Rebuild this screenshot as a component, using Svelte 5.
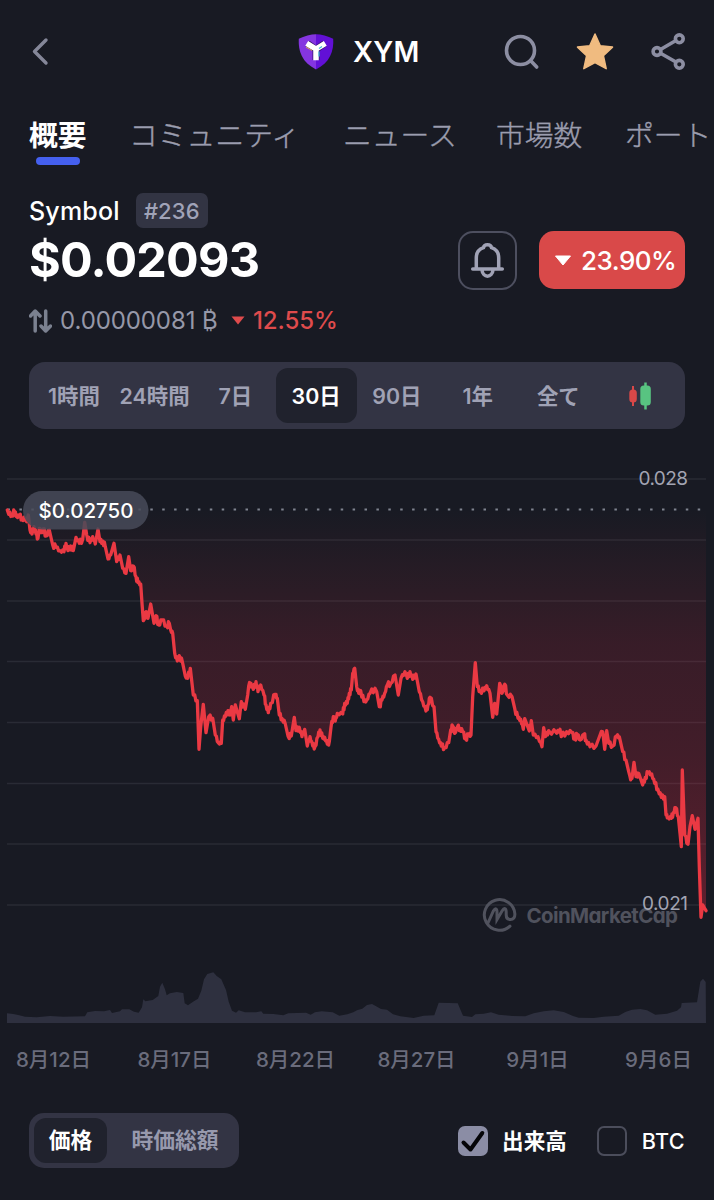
<script>
  const tabs = [
    { label: '概要', width: 100, active: true },
    { label: 'コミュニティ', width: 214 },
    { label: 'ニュース', width: 153 },
    { label: '市場数', width: 129 },
    { label: 'ポートフォリオ', width: 210 }
  ];
  const ranges = ['1時間', '24時間', '7日', '30日', '90日', '1年', '全て'];
  const dates = ['8月12日', '8月17日', '8月22日', '8月27日', '9月1日', '9月6日'];
  const gridLines = [479, 540, 601, 661.5, 722.5, 783.5, 844, 905];

  // Price samples, stored in thirds of a pixel and grouped by origin.
  const segments = [
    [0, 460, '22,150 26,163 36,163 44,155 50,170 58,168 66,175 75,178 80,185 85,165 90,210 96,222 102,200 108,222 114,235 118,205 124,218 130,207 138,228 148,210 158,255 168,262 180,272 192,275 198,250 204,272 212,258 220,272 228,232 238,250 248,238 254,187 260,225 270,248 278,230 286,252 294,207 300,245 308,243 316,260 324,297 332,285 342,250 350,305 360,285 368,325 378,340 386,290 392,332 400,318 408,350 414,368 422,372 426,430 430,482 438,455 444,475 452,432 462,490 468,467 476,495 486,480 500,498 508,490 512,510 518,520 524,580 532,603 538,587 548,610 556,648 563,655 571,625 580,705 592,722 597,868 602,800 610,733 618,818 626,770 638,775 646,825 655,848 664,850'],
    [180, 640, '128,240 136,230 144,212 150,225 155,200 160,240 166,195 178,236 184,185 196,208 203,165 206,138 213,130 220,148 228,125 234,155 242,135 252,165 258,195 265,218 272,190 286,163 292,175 298,225 306,235 316,252 324,288 334,288 343,232 348,272 358,262 366,290 374,268 382,318 390,290 398,318 405,320 414,290 420,270 428,295 434,292 442,312 448,305 453,262 460,230 466,243 472,220 488,222 494,190 502,190 508,160 514,150 518,100 524,85 530,140 536,160 542,152 552,185 560,180 570,160 585,145 590,155 598,200 606,180 614,160 622,135'],
    [390, 640, '2,130 15,105 25,165 33,115 45,95 52,115 60,95 68,118 78,102 88,155 98,185 108,213 114,195 120,172 132,200 138,275 146,298 154,318 164,323 176,308 182,270 188,258 194,280 202,262 210,265 218,275 227,297 235,285 243,285 248,170 256,68 262,140 270,152 282,152 290,137 300,160 308,232 314,190 320,222 329,130 336,160 344,133 352,165 366,170 374,205 384,235 392,238 400,268 404,236 418,273 424,242 430,285 444,290 456,320 461,263 466,290 476,272 500,280 510,268 514,290 530,275 546,278 554,297 562,283 570,300 582,283 588,300 600,320 618,318 632,280 638,275 644,328 650,272 656,310 668,318 680,288 688,290 698,335 708,360'],
    [560, 700, '206,215 210,230 216,235 222,187 228,230 236,220 248,255 256,232 264,218 275,222 284,250 294,268 304,292 314,290 318,345 324,352 334,355 340,338 347,323 355,350 360,400 364,440 367,210 370,290 374,405 384,433 390,380 397,347 405,388 414,355 418,500 423,652 428,615 438,632']
  ];
  const points = (list) =>
    list.flatMap(([ox, oy, s]) =>
      s.split(' ').map((p) => {
        const [x, y] = p.split(',').map(Number);
        return [ox + x / 3, oy + y / 3];
      })
    );
  const toPath = (pts) => 'M' + pts.map(([x, y]) => x.toFixed(1) + ' ' + y.toFixed(1)).join('L');

  const ticks = (pts) =>
    pts.flatMap(([x, y], i) => {
      const next = pts[i + 1];
      if (!next || next[0] > 690 || Math.abs(next[1] - y) > 11 || next[0] - x < 2) return [[x, y]];
      const d = [1.8, -2.2, 2.6, -1.4, 1.2, -2.6][i % 6];
      return [
        [x, y],
        [x + (next[0] - x) * 0.35, y + (next[1] - y) * 0.35 + d],
        [x + (next[0] - x) * 0.65, y + (next[1] - y) * 0.65 - d]
      ];
    });
  const price = toPath(ticks(points(segments)));
  const priceArea = price + 'L706 509L7 509Z';

  const volumeSegments = [
    [0, 950, '21,190 40,192 58,196 75,200 110,202 150,198 190,200 255,199 262,187 285,183 312,184 330,180 336,189 360,184 366,178 388,178 402,185 416,188 426,172 430,148 436,154 458,150 475,138 480,110 487,98 495,118 500,136 510,130 530,126 550,129 554,160 564,166 578,156 594,146 604,122 612,88 622,72 640,67 650,78 664,88 678,120 686,155 696,182 708,188 716,181 735,187 768,187 784,184 790,191 820,192 850,196 865,190 918,188 932,194 945,187 965,184 998,187 1018,197 1042,193 1060,187 1071,181'],
    [357, 880, '2,390 16,386 30,375 45,372 60,380 72,387 90,389 108,403 130,409 170,414 200,407 232,406 245,368 302,370 318,407 345,411 355,403 380,401 402,397 425,404 465,408 505,409 530,400 560,394 590,391 620,396 648,408 665,413 710,414 740,410 785,407 805,396 825,389 850,387 870,391 895,404 930,401 960,392 972,382 974,369 1020,367 1030,305 1038,296 1046,306']
  ];
  const volume = toPath(points(volumeSegments)) + 'L706 1023L7 1023Z';

  let showVolume = $state(true);
</script>

<main>
  <header>
    <svg class="back" width="20" height="30" viewBox="0 0 20 30"><path d="M16 4 4.500 15.500 16 27" /></svg>
    <div class="coin">
      <svg width="36" height="36" viewBox="0 0 36 36">
        <path d="M18 .2C13 .3 6 2 .8 4.800 0 17 4 28.500 18 35.500Z" fill="#8435e0" />
        <path d="M18 .2C23 .3 30 2 35.200 4.800 36 17 32 28.500 18 35.500Z" fill="#6210d6" />
        <path d="M9.500 9.500 18 15.500 26.500 9.500M18 15v11" fill="none" stroke="#38146d" stroke-width="7" />
        <path d="M8.700 9.300 18 15 27.300 9.300M18 14v12.200" fill="none" stroke="#fff" stroke-width="5.500" />
        <path d="m8 13 6 3.500" stroke="#d8a15e" stroke-width="1" />
        <path d="M21 17.500v5m0-8 3-2" stroke="#3bb8d7" stroke-width="1.200" fill="none" />
      </svg>
      <h1>XYM</h1>
    </div>
    <div class="tools">
      <svg width="36" height="38" viewBox="0 0 36 38"><circle cx="16.500" cy="17.500" r="14" /><path d="m26.500 27.500 6.200 6.500" /></svg>
      <svg width="40" height="40" viewBox="0 0 40 40"><path class="star" d="m20 2 5.300 11.800 12.200 1.300-9.100 8.600 2.800 13-11.200-6-11.200 6 2.800-13-9.100-8.600 12.200-1.300Z" /></svg>
      <svg width="36" height="40" viewBox="0 0 36 40"><path d="m9.500 17.500 15-8.800M9.500 21.300l15 8.500" /><circle cx="6" cy="19.500" r="3.900" /><circle cx="28.300" cy="6.800" r="3.900" /><circle cx="28.300" cy="32.300" r="3.900" /></svg>
    </div>
  </header>

  <nav>
    {#each tabs as tab}
      <span class="tab" class:active={tab.active} style="width: {tab.width}px"><b>{tab.label}</b></span>
    {/each}
  </nav>

  <section class="summary">
    <div class="figures">
      <div class="name"><span>Symbol</span><span class="rank">#236</span></div>
      <div class="price">$0.02093</div>
      <div class="btc">
        <svg width="23" height="24" viewBox="0 0 23 24"><path d="M6.200 22V3M1.500 7 6.200 2 11 7M16.700 2v19M12 17l4.700 5 4.800-5" /></svg>
        <span class="amount">0.00000081 <i>₿</i></span>
        <svg class="caret" width="14" height="9" viewBox="0 0 14 9"><path d="M.5.5h13L7 8.500Z" /></svg>
        <span class="loss">12.55%</span>
      </div>
    </div>
    <div class="actions">
      <div class="bell">
        <svg width="36" height="40" viewBox="0 0 36 40"><path d="M2.700 28h29.600M6.300 28V17C6.300 11 9.500 8 13.500 6.700 14 2.700 21 2.700 21.500 6.700 25.500 8 28.700 11 28.700 17v11M12 29c.8 8.200 10.200 8.200 11 0" /></svg>
      </div>
      <div class="change">
        <svg width="18" height="11" viewBox="0 0 18 11"><path d="M1.500 1h15L9 10Z" /></svg>
        <span>23.90%</span>
      </div>
    </div>
  </section>

  <div class="ranges">
    {#each ranges as r}
      <span class:selected={r === '30日'}><b>{r}</b></span>
    {/each}
    <span>
      <svg width="26" height="30" viewBox="0 0 26 30">
        <path d="M6 5v20" stroke="#d94848" stroke-width="2" /><rect x="2.300" y="8.500" width="7.500" height="13" rx="3.500" fill="#d94848" />
        <path d="M18.500 1.500v27" stroke="#58c481" stroke-width="2.500" /><rect x="13.300" y="4.500" width="10.500" height="20" rx="3.500" fill="#58c481" />
      </svg>
    </span>
  </div>

  <svg class="chart" width="714" height="596" viewBox="0 440 714 596">
    <defs>
      <linearGradient id="loss" gradientUnits="userSpaceOnUse" x1="0" y1="509" x2="0" y2="918">
        <stop offset="0" stop-color="#ea3943" stop-opacity="0" />
        <stop offset=".33" stop-color="#ea2943" stop-opacity=".15" />
        <stop offset=".6" stop-color="#ea2943" stop-opacity=".2" />
        <stop offset="1" stop-color="#ea2943" stop-opacity=".34" />
      </linearGradient>
    </defs>
    {#each gridLines as y}
      <path d="M7 {y}H706" stroke="#292b35" stroke-width="1.300" />
    {/each}
    {#if showVolume}<path d={volume} fill="#2e303f" />{/if}
    <path d={priceArea} fill="url(#loss)" />
    <path d="M7.500 509.500H706" stroke="#7f838f" stroke-width="2" stroke-dasharray="2.500 9.400" />
    <g class="mark">
      <path d="M510 926.200A15.300 15.300 0 1 1 514.900 914c0 4.500-2 5.500-4.500 5.500s-4.200-1.500-4.200-4.500v-3c0-4-2-4.500-4-1.200l-5.200 8.700v-7.500c0-4-1.800-4-3.500-1.300L487.500 924" />
      <text x="526.500" y="923" textLength="151.500">CoinMarketCap</text>
    </g>
    <path d={price} fill="none" stroke="#ea3943" stroke-width="3.300" stroke-linejoin="round" stroke-linecap="round" />
    <text class="axis" x="638.500" y="485" textLength="49.500">0.028</text>
    <text class="axis" x="642" y="910" textLength="46">0.021</text>
    <rect x="23" y="491" width="125.500" height="38.500" rx="19.250" fill="#474b58" fill-opacity=".86" />
    <text class="start" x="38.500" y="518" textLength="95">$0.02750</text>
  </svg>

  <div class="dates">
    {#each dates as d}<span>{d}</span>{/each}
  </div>

  <footer>
    <div class="switch"><span class="on">価格</span><span class="off">時価総額</span></div>
    <div class="checks">
      <button class="check" onclick={() => (showVolume = !showVolume)}>
        <span class="box" class:filled={showVolume}>
          {#if showVolume}<svg width="30" height="30" viewBox="0 0 30 30"><path d="m5.500 16.500 7 7L24.300 7" /></svg>{/if}
        </span>
        <span class="volume-label">出来高</span>
      </button>
      <div class="check"><span class="box"></span><span class="btc-label">BTC</span></div>
    </div>
  </footer>
</main>

<style>
  :global(body) { margin: 0; background: #181a23; }
  main {
    width: 714px;
    height: 1200px;
    overflow: hidden;
    background: #181a23;
    color: #fff;
    font-family: Inter, "Noto Sans CJK JP", sans-serif;
    display: flex;
    flex-direction: column;
  }
  svg { display: block; flex: none; }
  header {
    height: 103px;
    padding: 0 27px 0 30px;
    display: grid;
    grid-template-columns: 268px 1fr auto;
    align-items: center;
  }
  .back path { fill: none; stroke: #858799; stroke-width: 3.4; stroke-linecap: round; stroke-linejoin: round; }
  .back { margin-top: -1px; }
  .coin { display: flex; align-items: center; gap: 19px; }
  .coin svg { margin-top: 1px; }
  h1 { margin: 0; font-size: 28px; font-weight: 600; letter-spacing: .2px; }
  .tools { display: flex; align-items: center; gap: 36px; }
  .tools svg { fill: none; stroke: #8c8ea2; stroke-width: 3.6; stroke-linecap: round; }
  .tools svg:first-child { margin-right: -1px; }
  .tools .star { fill: #f0bb80; stroke: #f0bb80; stroke-width: 1.5; stroke-linejoin: round; }

  nav { display: flex; height: 76px; padding-left: 29px; overflow: hidden; }
  .tab { flex: none; font-size: 28.8px; line-height: 65px; color: #9b9dae; white-space: nowrap; }
  .tab b { font-weight: 300; display: inline-block; -webkit-text-stroke: .4px #9b9dae; }
  .tab.active { color: #fff; }
  .tab.active b { font-weight: 700; -webkit-text-stroke: 0; }
  .tab.active b::after { content: ""; display: block; width: 44px; height: 8px; border-radius: 4px; background: #4560ef; margin: -11px auto 0; }

  .summary { height: 183px; padding: 0 29px; display: flex; justify-content: space-between; }
  .figures { padding-top: 14px; }
  .name { display: flex; align-items: center; gap: 16px; height: 35px; font-size: 25px; font-weight: 500; letter-spacing: .2px; }
  .rank { height: 35px; width: 72px; text-align: center; border-radius: 7px; background: #323443; color: #a0a3b8; font-size: 22px; line-height: 36px; letter-spacing: .1px; }
  .price { font-size: 48.5px; font-weight: 700; line-height: 64px; letter-spacing: -.8px; }
  .btc { display: flex; align-items: center; height: 57px; font-size: 24px; }
  .btc > svg:first-child { fill: none; stroke: #7b8190; stroke-width: 3.5; stroke-linejoin: round; stroke-linecap: round; }
  .amount { margin-left: 8px; color: #9698a8; letter-spacing: -.1px; width: 157px; white-space: nowrap; }
  .amount i { font-style: normal; }
  .caret { fill: #df4b4c; margin-left: 14px; }
  .loss { margin-left: 8px; color: #df4b4c; font-weight: 500; letter-spacing: -.1px; }
  .actions { display: flex; gap: 22px; padding-top: 52px; }
  .bell { box-sizing: border-box; width: 59px; height: 59px; border: 2px solid #4d4f5f; border-radius: 15px; display: grid; place-items: center; }
  .bell path { fill: none; stroke: #a0a2b5; stroke-width: 3.5; stroke-linecap: round; stroke-linejoin: round; }
  .change { width: 146px; height: 58px; box-sizing: border-box; border-radius: 15px; background: #d94949; display: flex; align-items: center; padding-left: 15px; gap: 9px; font-size: 26px; font-weight: 500; letter-spacing: -.5px; }
  .change svg { fill: #fff; stroke: #fff; stroke-linejoin: round; }

  .ranges { margin: 0 29px; height: 67px; box-sizing: border-box; padding: 6px 5px; border-radius: 16px; background: #333444; display: grid; grid-template-columns: repeat(8, 1fr); font-size: 21.4px; color: #a0a2b5; }
  .ranges span { display: flex; align-items: center; justify-content: center; border-radius: 12px; }
  .ranges b { font-weight: 600; margin: -2px 1px 0 0; }
  .ranges .selected { background: #20222d; color: #fff; }

  .chart { margin-top: 11px; }
  .chart text { font-family: Inter, sans-serif; }
  .mark path { fill: none; stroke: #50525d; stroke-width: 3; stroke-linecap: round; }
  .mark text { fill: #50525d; font-size: 20.5px; font-weight: 700; font-feature-settings: "cv11"; }
  .chart .axis { fill: #a2a4b2; font-size: 19px; }
  .chart .start { fill: #fff; font-size: 20.5px; font-weight: 500; }

  .dates { display: grid; grid-template-columns: repeat(6, 121px); margin-left: -7px; height: 46px; line-height: 47px; text-align: center; font-size: 20.5px; font-weight: 500; color: #6a6c7c; }
  footer { margin: 31px 29px 0; height: 55px; display: flex; justify-content: space-between; align-items: center; }
  .switch { box-sizing: border-box; width: 210px; height: 55px; padding: 5px; border-radius: 15px; background: #333444; display: flex; font-size: 21.8px; line-height: 45px; text-align: center; }
  .on { width: 73px; border-radius: 12px; background: #20222d; font-weight: 700; }
  .off { flex: 1; color: #9799ad; font-weight: 600; padding-left: 9px; }
  .checks { display: flex; gap: 30px; }
  .check { display: flex; align-items: center; gap: 15px; padding: 0; border: 0; background: none; color: #fff; font: 500 21.6px Inter, "Noto Sans CJK JP", sans-serif; }
  .volume-label { font-weight: 600; margin: -3px 0 0 -1px; }
  .box { box-sizing: border-box; width: 30px; height: 30px; border: 2px solid #4b4d5b; border-radius: 7px; }
  .box.filled { border: 0; background: #8b8da5; }
  .box path { fill: none; stroke: #050508; stroke-width: 4; stroke-linecap: round; stroke-linejoin: round; }
  .btc-label { letter-spacing: .3px; }
</style>
